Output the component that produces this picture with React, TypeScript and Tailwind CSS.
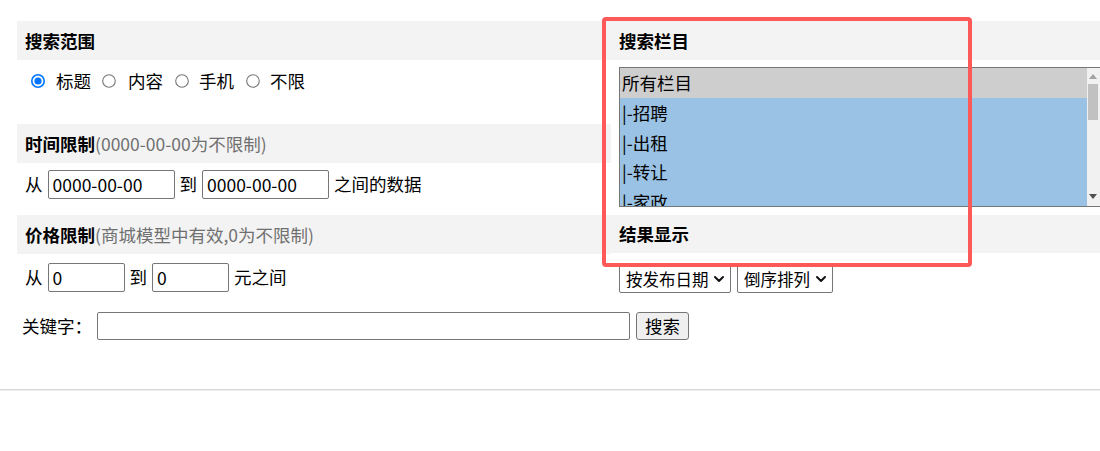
import React from 'react';

const font = { fontFamily: '"Noto Sans CJK SC", "Noto Sans", sans-serif' };

const Radio = ({ checked }: { checked?: boolean }) => (
  <svg width="14" height="14" viewBox="0 0 14 14" className="shrink-0">
    {checked ? (
      <>
        <circle cx="7" cy="7" r="6.2" fill="white" stroke="#0075ff" strokeWidth="1.6" />
        <circle cx="7" cy="7" r="3.6" fill="#0075ff" />
      </>
    ) : (
      <circle cx="7" cy="7" r="6.3" fill="white" stroke="#767676" strokeWidth="1.1" />
    )}
  </svg>
);

const Chevron = () => (
  <svg width="12" height="12" viewBox="0 0 12 12" className="shrink-0">
    <path d="M2 4 L6 8 L10 4" fill="none" stroke="#111" strokeWidth="2" strokeLinecap="round" strokeLinejoin="round" />
  </svg>
);

const SectionHead = ({ title, note }: { title: string; note?: string }) => (
  <div className="h-[39px] bg-[#f3f3f3] pl-[8px] flex items-center text-[17.5px] leading-none whitespace-nowrap">
    <span className="font-bold text-black">{title}</span>
    {note && <span className="text-[#707070]">{note}</span>}
  </div>
);

const TextBox = ({ value, w }: { value?: string; w: string }) => (
  <div className={`${w} h-[29px] shrink-0 border border-[#767676] rounded-[2px] pl-[4px] flex items-center text-[17.5px] leading-none bg-white`}>
    {value}
  </div>
);

const DropDown = ({ label, w }: { label: string; w: string }) => (
  <div className={`${w} h-[28px] border border-[#767676] rounded-[2px] pl-[6px] pr-[5px] flex items-center justify-between text-[16.5px] leading-none bg-white whitespace-nowrap overflow-hidden`}>
    <span>{label}</span>
    <Chevron />
  </div>
);

const categories = ['|-招聘', '|-出租', '|-转让', '|-家政'];

export default function App() {
  return (
    <div className="relative w-[1100px] h-[451px] overflow-hidden bg-white text-black" style={font}>
      <div className="flex pt-[21px]">
        {/* left column */}
        <div className="ml-[17px] w-[594px] shrink-0">
          <SectionHead title="搜索范围" />
          <div className="h-[64px] pt-[11px] pl-[14px] flex items-start text-[17.5px] leading-[20px]">
            <div className="flex items-center h-[20px] whitespace-nowrap">
              <Radio checked />
              <span className="ml-[11px]">标题</span>
              <span className="ml-[11px]"><Radio /></span>
              <span className="ml-[12px]">内容</span>
              <span className="ml-[12px]"><Radio /></span>
              <span className="ml-[10px]">手机</span>
              <span className="ml-[12px]"><Radio /></span>
              <span className="ml-[10px]">不限</span>
            </div>
          </div>

          <SectionHead title="时间限制" note="(0000-00-00为不限制)" />
          <div className="h-[52px] pt-[7px] pl-[8px] flex items-start gap-[5px] text-[17.5px] whitespace-nowrap">
            <span className="h-[29px] flex items-center">从</span>
            <TextBox value="0000-00-00" w="w-[127px]" />
            <span className="h-[29px] flex items-center">到</span>
            <TextBox value="0000-00-00" w="w-[127px]" />
            <span className="h-[29px] flex items-center">之间的数据</span>
          </div>

          <SectionHead title="价格限制" note="(商城模型中有效,0为不限制)" />
          <div className="h-[58px] pt-[9px] pl-[8px] flex items-start gap-[5px] text-[17.5px] whitespace-nowrap">
            <span className="h-[29px] flex items-center">从</span>
            <TextBox value="0" w="w-[77px]" />
            <span className="h-[29px] flex items-center">到</span>
            <TextBox value="0" w="w-[77px]" />
            <span className="h-[29px] flex items-center">元之间</span>
          </div>

          <div className="pl-[5px] flex items-center text-[17.5px] whitespace-nowrap">
            <span className="w-[75px] shrink-0">关键字：</span>
            <div className="w-[533px] h-[28px] border border-[#767676] rounded-[2px] bg-white shrink-0" />
            <button className="ml-[6px] h-[28px] w-[53px] border border-[#767676] rounded-[3px] bg-[#efefef] text-[17.5px] leading-none shrink-0">
              搜索
            </button>
          </div>
        </div>

        {/* right column */}
        <div className="flex-1 min-w-0">
          <div className="h-[39px] bg-[#f3f3f3] pl-[8px] flex items-center text-[17.5px] font-bold leading-none">
            搜索栏目
          </div>
          <div className="ml-[8px] mt-[7px] w-[484px] h-[140px] border border-[#767676] flex overflow-hidden text-[17.5px]">
            <div className="flex-1 flex flex-col">
              <div className="h-[30px] shrink-0 bg-[#cecece] pl-[2px] flex items-center leading-none">所有栏目</div>
              {categories.map((c) => (
                <div key={c} className="h-[29.5px] shrink-0 bg-[#9ac2e4] pl-[2px] flex items-center leading-none">
                  {c}
                </div>
              ))}
            </div>
            <div className="w-[15px] bg-[#f1f1f1] flex flex-col items-center relative">
              <svg width="8" height="5" viewBox="0 0 8 5" className="mt-[6px] mr-[3px]">
                <path d="M0 5 L4 0 L8 5 Z" fill="#a3a3a3" />
              </svg>
              <div className="mt-[5px] w-[10px] h-[36px] bg-[#c1c1c1] mr-[3px]" />
              <div className="flex-1" />
              <svg width="8" height="5" viewBox="0 0 8 5" className="mb-[7px] mr-[3px]">
                <path d="M0 0 L8 0 L4 5 Z" fill="#505050" />
              </svg>
            </div>
          </div>
          <div className="mt-[8px] h-[38px] bg-[#f3f3f3] pl-[8px] flex items-center text-[17.5px] font-bold leading-none">
            结果显示
          </div>
          <div className="mt-[12px] ml-[8px] flex gap-[6px]">
            <DropDown label="按发布日期" w="w-[112px]" />
            <DropDown label="倒序排列" w="w-[96px]" />
          </div>
        </div>
      </div>

      <div className="mt-[49px] border-t border-[#d6d6d6] border-b border-b-[#eeeeee]" />

      {/* annotation box */}
      <div className="absolute left-[602px] top-[17px] w-[370px] h-[250px] border-[4px] border-[#fd5959] rounded-[4px] pointer-events-none" />
    </div>
  );
}
